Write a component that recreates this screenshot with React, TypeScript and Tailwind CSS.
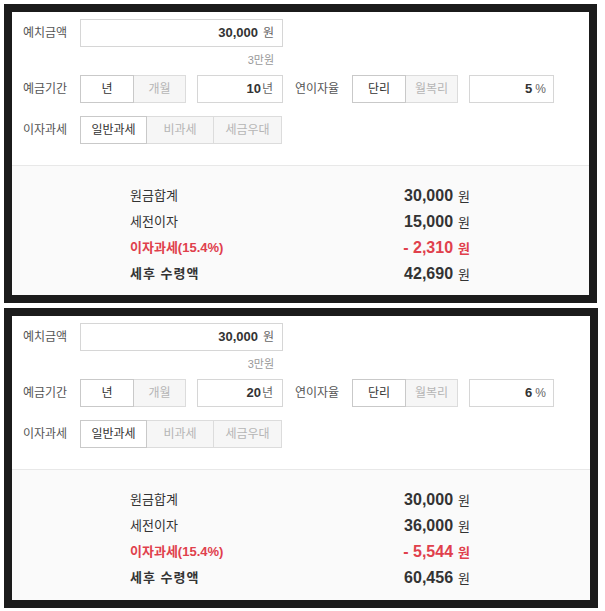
const panels = [
  { amount: '30,000', man: '3만원', years: '10', rate: '5', principal: '30,000', interest: '15,000', tax: '2,310', net: '42,690' },
  { amount: '30,000', man: '3만원', years: '20', rate: '6', principal: '30,000', interest: '36,000', tax: '5,544', net: '60,456' },
]

function Segment({ items, widths }: { items: string[]; widths: string[] }) {
  return (
    <div className="flex h-[28px]">
      {items.map((item, i) => (
        <div
          key={item}
          className={
            i === 0
              ? `${widths[i]} h-full flex items-center justify-center border border-[#c9c9c9] bg-white text-[#333]`
              : `${widths[i]} h-full flex items-center justify-center border border-l-0 border-[#dcdcdc] bg-[#f6f6f6] text-[#b5b5b5]`
          }
        >
          {item}
        </div>
      ))}
    </div>
  )
}

function Panel({ p, extra }: { p: (typeof panels)[number]; extra: string }) {
  return (
    <div className={`border-8 border-[#1b1b1b] flex flex-col bg-white ${extra}`}>
      <div className="pt-[7px] pl-[11px] text-[12px] leading-[14px] text-[#555]">
        <div className="flex items-center h-[28px]">
          <div className="w-[57px]">예치금액</div>
          <div className="w-[203px] h-full border border-[#d6d6d6] flex items-center justify-end pr-[8px]">
            <span className="font-bold text-[13px] text-[#333]">{p.amount}</span>
            <span className="ml-[5px] text-[#666]">원</span>
          </div>
        </div>
        <div className="h-[28px] w-[260px] text-right pr-[9px] pt-[7px] text-[11px] leading-[13px] text-[#999]">{p.man}</div>
        <div className="flex items-center h-[28px]">
          <div className="w-[57px]">예금기간</div>
          <Segment items={['년', '개월']} widths={['w-[54px]', 'w-[52px]']} />
          <div className="ml-[11px] w-[86px] h-full border border-[#d6d6d6] flex items-center justify-end pr-[9px]">
            <span className="font-bold text-[13px] text-[#333]">{p.years}</span>
            <span className="ml-[1px] text-[#666]">년</span>
          </div>
          <div className="ml-[12px] w-[57px]">연이자율</div>
          <Segment items={['단리', '월복리']} widths={['w-[54px]', 'w-[52px]']} />
          <div className="ml-[11px] w-[85px] h-full border border-[#d6d6d6] flex items-center justify-end pr-[7px]">
            <span className="font-bold text-[13px] text-[#333]">{p.rate}</span>
            <span className="ml-[3px] text-[#666]">%</span>
          </div>
        </div>
        <div className="flex items-center h-[28px] mt-[13px]">
          <div className="w-[57px]">이자과세</div>
          <Segment items={['일반과세', '비과세', '세금우대']} widths={['w-[67px]', 'w-[67px]', 'w-[68px]']} />
        </div>
      </div>
      <div className="mt-[21px] flex-1 border-t border-[#e8e8e8] bg-[#fafafa] pt-[17px] pl-[118px] text-[13px] text-[#333]">
        <div className="w-[340px]">
          <div className="h-[26px] flex items-center justify-between">
            <span>원금합계</span>
            <span><b className="text-[16px]">{p.principal}</b><span className="ml-[5px]">원</span></span>
          </div>
          <div className="h-[26px] flex items-center justify-between">
            <span>세전이자</span>
            <span><b className="text-[16px]">{p.interest}</b><span className="ml-[5px]">원</span></span>
          </div>
          <div className="h-[26px] flex items-center justify-between font-bold text-[#e0404c]">
            <span>이자과세(15.4%)</span>
            <span><span className="text-[16px]">- {p.tax}</span><span className="ml-[5px]">원</span></span>
          </div>
          <div className="h-[26px] flex items-center justify-between">
            <span className="font-bold tracking-[1px]">세후 수령액</span>
            <span><b className="text-[16px]">{p.net}</b><span className="ml-[5px]">원</span></span>
          </div>
        </div>
      </div>
    </div>
  )
}

export default function App() {
  return (
    <div className="w-[605px] h-[611px] bg-white pt-1 pl-1 flex flex-col gap-[5px] font-['Liberation_Sans','Noto_Sans_CJK_KR',sans-serif]">
      <Panel p={panels[0]} extra="w-[593px] h-[299px]" />
      <Panel p={panels[1]} extra="w-[594px] h-[300px]" />
    </div>
  )
}
